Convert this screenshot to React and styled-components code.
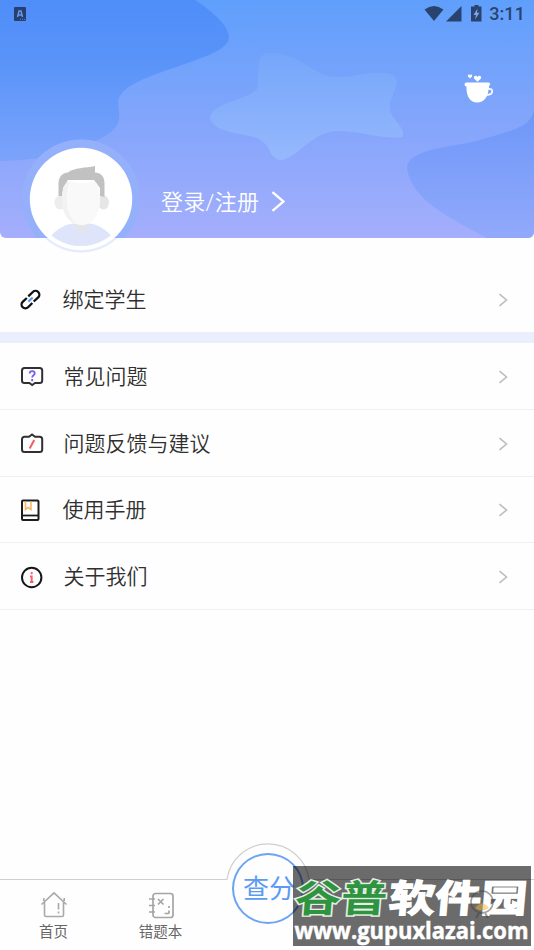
import React from "react";
import styled, { createGlobalStyle } from "styled-components";

const GlobalStyle = createGlobalStyle`
  body {
    margin: 0;
    background-color: #fefefe;
    font-family: Roboto, "Noto Sans CJK SC", sans-serif;
  }
`;

const PageDiv = styled.div`
  position: relative;
  width: 534px;
  height: 950px;
  display: flex;
  flex-direction: column;
  overflow: hidden;
`;

const HeaderDiv = styled.header`
  position: relative;
  height: 238px;
  display: flex;
  flex-direction: column;
`;

const HeaderArt = styled.svg`
  position: absolute;
  left: 0;
  top: 0;
  border-radius: 0 0 6px 6px;
`;

const StatusBar = styled.div`
  position: relative;
  height: 27px;
  padding: 0 9px 0 14px;
  display: flex;
  align-items: center;
  justify-content: space-between;
`;

const StatusRight = styled.div`
  display: flex;
  align-items: center;
  color: #29436f;
  font-size: 18px;
  font-weight: 500;
  line-height: 27px;
  letter-spacing: 0.1px;
`;

const CupRow = styled.div`
  position: relative;
  height: 31px;
  padding: 47px 40px 0 0;
  display: flex;
  justify-content: flex-end;
`;

const ProfileDiv = styled.div`
  position: relative;
  display: flex;
  margin-top: 34px;
  padding-left: 21px;
`;

const LoginDiv = styled.div`
  display: flex;
  align-items: center;
  height: 30px;
  margin: 47px 0 0 20px;
  color: white;
  font-size: 22px;
  font-weight: 350;
  line-height: 28px;
  letter-spacing: 0.3px;
  white-space: nowrap;

  svg {
    margin-left: 12px;
  }
`;

const LoginText = styled.span`
  padding-top: 3px;
`;

const Menu = styled.main`
  flex: 1;
`;

const MenuRow = styled.div`
  box-sizing: border-box;
  height: ${(props) => (props.$first ? "105px" : "66.75px")};
  padding: ${(props) => (props.$first ? "29px 26px 0 20px" : "2px 26px 0 20px")};
  border-bottom: ${(props) =>
    props.$first ? "11px solid #ebeffd" : "1px solid #f0f0f1"};
  display: flex;
  align-items: center;
  color: #303030;
  font-size: 21px;
  font-weight: 350;
`;

const MenuIcon = styled.div`
  width: ${(props) => props.$width}px;
  display: flex;
`;

const MenuLabel = styled.div`
  flex: 1;
  line-height: 30px;
`;

const NavDiv = styled.nav`
  position: relative;
  height: 71px;
  display: flex;
`;

const NavLine = styled.svg`
  position: absolute;
  left: 0;
  top: -37px;
`;

const NavItem = styled.div`
  position: relative;
  width: 107px;
  padding-top: 12.5px;
  display: flex;
  flex-direction: column;
  align-items: center;
  color: #666;
  font-size: 14.5px;
  line-height: 20px;

  svg {
    height: 31px;
  }
`;

const ScoreButton = styled.div`
  position: absolute;
  left: 232px;
  top: -26px;
  box-sizing: border-box;
  width: 72px;
  height: 71px;
  padding-left: 2px;
  border: 2px solid #6ba3f5;
  border-radius: 50%;
  display: flex;
  align-items: center;
  justify-content: center;
  color: #5b9bf3;
  font-size: 26px;
  line-height: 36px;
  white-space: nowrap;
`;

const Watermark = styled.div`
  position: absolute;
  left: 293px;
  top: 866px;
  width: 238px;
  height: 80px;
  background-color: rgba(0, 0, 0, 0.58);

  svg {
    display: block;
    overflow: visible;
  }
`;

function Arrow({ color, width, height, stroke }) {
  return (
    <svg width={width} height={height} viewBox={`0 0 ${width} ${height}`}>
      <path
        d={`M1.5 1.2 L${width - 1.5} ${height / 2} L1.5 ${height - 1.2}`}
        fill="none"
        stroke={color}
        strokeWidth={stroke}
      />
    </svg>
  );
}

function HeaderBackground() {
  return (
    <HeaderArt width="534" height="238" viewBox="0 0 534 238">
      <defs>
        <linearGradient id="sky" x1="0" y1="0" x2="0" y2="238" gradientUnits="userSpaceOnUse">
          <stop offset="0" stopColor="#5f9ffc" />
          <stop offset="0.5" stopColor="#82a5fb" />
          <stop offset="1" stopColor="#a5aefc" />
        </linearGradient>
        <linearGradient id="left" x1="0" y1="0" x2="0" y2="160" gradientUnits="userSpaceOnUse">
          <stop offset="0" stopColor="#4f8df9" />
          <stop offset="0.4" stopColor="#5a94f9" />
          <stop offset="1" stopColor="#7ca3fb" />
        </linearGradient>
        <linearGradient id="star" x1="0" y1="52" x2="0" y2="160" gradientUnits="userSpaceOnUse">
          <stop offset="0" stopColor="#75a6fa" />
          <stop offset="1" stopColor="#96b8fd" />
        </linearGradient>
        <linearGradient id="right" x1="0" y1="110" x2="0" y2="238" gradientUnits="userSpaceOnUse">
          <stop offset="0" stopColor="#6d97f9" />
          <stop offset="1" stopColor="#92a9fb" />
        </linearGradient>
      </defs>
      <rect width="534" height="238" fill="url(#sky)" />
      <path
        d="M0 0H195C212 11 229 26 229 37C229 48 211 55 185 64C150 76 118 86 118 103C118 110 121 116 118 123C114 133 101 139 80 148C55 157 35 160 0 161Z"
        fill="url(#left)"
      />
      <path
        d="M210 118C211 103 248 100 257 89C261 80 253 53 269 53C298 51 314 77 336 77C355 78 380 67 395 76C401 86 388 97 390 110C392 120 408 130 402 137C383 140 358 130 335 131C311 133 296 159 281 160C268 159 272 144 257 138C240 133 213 132 210 118Z"
        fill="url(#star)"
      />
      <path
        d="M534 110C530 129 508 131 480 140C449 148 406 149 407 169C413 200 446 216 487 238H534Z"
        fill="url(#right)"
      />
    </HeaderArt>
  );
}

function InputBadge() {
  return (
    <svg width="12" height="14" viewBox="0 0 12 14">
      <rect width="12" height="14" rx="1" fill="#263f70" />
      <path d="M3.500 10L5 4H7L8.500 10M4 8H8" fill="none" stroke="#6896e5" strokeWidth="1.500" />
      <path d="M6 12.300H11" stroke="#5c86cb" strokeWidth="1" strokeDasharray="1 1" />
    </svg>
  );
}

function StatusIcons() {
  return (
    <svg width="65" height="20" viewBox="0 0 65 20">
      <path d="M0.5 5.5Q10 -1.5 19.5 5.5L10 17Z" fill="#29436f" />
      <path d="M22 17.5L37.5 2V17.5Z" fill="#29436f" />
      <path d="M50.5 1h4v1.5h3V17.5H47V2.5h3.5Z" fill="#29436f" />
      <path d="M53.5 4.5L49.5 11H52L51 15.5L55.5 8.8H53Z" fill="#78a7ef" />
    </svg>
  );
}

function CupIcon() {
  return (
    <svg width="30" height="31" viewBox="0 0 30 31">
      <path
        d="M2.500 8.500H24.500a1.700 1.700 0 0 1 .5 3.300V14.500H24.500C24.500 22.500 20 28.500 13.200 28.500S2.500 22.500 2.500 14.500V12.500a2 2 0 0 1 0-4Z"
        fill="white"
      />
      <path d="M23.500 15C30 13.500 30 21 22.500 20.800" fill="none" stroke="white" strokeWidth="1.700" />
      <path d="M13.500 7.800L10 4.500C9 1.500 12.500 1 13.500 3C14.500 1 18 1.500 17 4.500Z" fill="white" />
      <path d="M6 4.500L4 2.500C3.500 0 5.500 0 6 1.200C6.500 0 8.800 0 8 2.500Z" fill="white" />
    </svg>
  );
}

function Avatar() {
  return (
    <svg width="120" height="120" viewBox="0 0 120 120">
      <defs>
        <clipPath id="face">
          <circle cx="60" cy="59.500" r="47.500" />
        </clipPath>
        <clipPath id="ringTop">
          <rect width="120" height="99" />
        </clipPath>
      </defs>
      <circle cx="60" cy="60" r="53.500" fill="#e3ecfe" />
      <circle cx="60" cy="59.500" r="59" fill="#95b0fb" clipPath="url(#ringTop)" />
      <circle cx="60" cy="60" r="51.200" fill="white" />
      <g clipPath="url(#face)">
        <path d="M29 99C34 90 46 84.500 53 84.500H68C76 84.500 86 91 92 99V112H29Z" fill="#dee5fa" />
        <path d="M54 78H67V89Q60 98 54 89Z" fill="#e4e5e6" />
      </g>
      <ellipse cx="39" cy="63.500" rx="5.500" ry="7" fill="#ededee" />
      <ellipse cx="82.500" cy="63.500" rx="5.500" ry="7" fill="#e6e6e6" />
      <path
        d="M37.500 57V45C37.500 38 41 34 47 33.500C53 28.500 65 29 74 27V33.500C80 33.500 83.500 38 83.500 44V58L79 57V49L73 41H47L42 49V57Z"
        fill="#c1c1c1"
      />
      <path d="M41 60C41 51 43 44 49 42C56 45 67 45 72 42C78 44 79 52 79 61C79 76 71 86 61 86C50 86 41 76 41 60Z" fill="#f9f9f9" />
      <path d="M41 60C41 51 43 44 49 42C44 54 44 74 55 85C46 82 41 73 41 60Z" fill="#f1f2f3" />
    </svg>
  );
}

function LinkIcon() {
  return (
    <svg width="21" height="21" viewBox="0 0 21 21" fill="none" strokeWidth="2.300">
      <path d="M8.300 7.300L12.800 3a3.800 3.800 0 0 1 5.400 5.400L13.700 12.500" stroke="#111" />
      <path d="M6.800 9L2.700 12.900a3.800 3.800 0 0 0 5.400 5.400L12.300 14" stroke="#111" />
      <path d="M8.300 12.700L12.700 8.500" stroke="#5d9ff0" />
    </svg>
  );
}

function QuestionIcon() {
  return (
    <svg width="24" height="21" viewBox="0 0 24 21" fill="none">
      <path
        d="M4.500 2H19.700a2.500 2.500 0 0 1 2.500 2.500V14.500a2.500 2.500 0 0 1-2.500 2.500H15L12.200 19L9.400 17H4.500A2.500 2.500 0 0 1 2 14.500V4.500A2.500 2.500 0 0 1 4.500 2Z"
        stroke="#303033"
        strokeWidth="2"
      />
      <path d="M9.700 7.500C9.700 4.300 14.700 4.300 14.700 7.500C14.700 9.500 12.200 9 12.200 11.500M12.200 13V15.200" stroke="#7760ee" strokeWidth="1.900" />
    </svg>
  );
}

function FeedbackIcon() {
  return (
    <svg width="24" height="21" viewBox="0 0 24 21" fill="none">
      <path
        d="M4.500 3.700H9L12 1.500L15 3.700H19.700A2.500 2.500 0 0 1 22.200 6.200V16.500A2.500 2.500 0 0 1 19.700 19H4.500A2.500 2.500 0 0 1 2 16.500V6.200A2.500 2.500 0 0 1 4.500 3.700Z"
        stroke="#303033"
        strokeWidth="2"
      />
      <path d="M14.200 7L9.700 15.500" stroke="#f15e63" strokeWidth="2" />
    </svg>
  );
}

function BookIcon() {
  return (
    <svg width="20" height="22" viewBox="0 0 20 22" fill="none">
      <rect x="2" y="1.500" width="16.500" height="19.500" rx="1" stroke="#1d1d1d" strokeWidth="2" />
      <path d="M2 16.500H18" stroke="#1d1d1d" strokeWidth="1.800" />
      <path d="M5.500 2.500V10.500L8.200 8.500L11 10.500V2.500" stroke="#f4bb64" strokeWidth="1.600" />
    </svg>
  );
}

function InfoIcon() {
  return (
    <svg width="23" height="23" viewBox="0 0 23 23" fill="none">
      <circle cx="11.700" cy="11.500" r="9.700" stroke="#161616" strokeWidth="2" />
      <path d="M11.700 6V8.200M10 10.500H11.700V16M10 16H13.400" stroke="#f1646b" strokeWidth="1.900" />
    </svg>
  );
}

function HomeIcon() {
  return (
    <svg width="28" height="31" viewBox="0 0 28 31" fill="none" stroke="#a9a9a9" strokeWidth="1.600">
      <path d="M1.500 12.500L14 0.800L26.500 12.500M4.500 10V23Q4.500 24.500 6 24.500H22Q23.500 24.500 23.500 23V10M3.800 6V9M24.200 6V9" />
      <path d="M18.500 11V17.500M18.500 19.500V21.500" />
    </svg>
  );
}

function NotebookIcon() {
  return (
    <svg width="28" height="31" viewBox="0 0 28 31" fill="none" stroke="#a5a5a5" strokeWidth="1.700">
      <rect x="6" y="1.500" width="20" height="24" rx="2.500" />
      <path d="M2 7H8M2 13.500H8M2 20H8" />
      <path d="M11 7L16.500 12.500M16.500 7L11 12.500M22 14V16M17.500 21.500H21Q22 21.500 22 20.500V18.500" />
    </svg>
  );
}

function MineShape() {
  return (
    <>
      <circle cx="11" cy="11" r="11" fill="none" stroke="#444" strokeWidth="1.600" />
      <path d="M4 17Q11 8 18 17Q11 22 4 17Z" fill="#f5b52e" />
      <path d="M8 22L5 27M14 22L17 27" fill="none" stroke="#444" strokeWidth="2" />
    </>
  );
}

const rows = [
  { label: "绑定学生", icon: <LinkIcon />, width: 42.5, first: true },
  { label: "常见问题", icon: <QuestionIcon />, width: 43.5 },
  { label: "问题反馈与建议", icon: <FeedbackIcon />, width: 43.5 },
  { label: "使用手册", icon: <BookIcon />, width: 42.5 },
  { label: "关于我们", icon: <InfoIcon />, width: 43.5 },
];

function App() {
  return (
    <PageDiv>
      <GlobalStyle />
      <HeaderDiv>
        <HeaderBackground />
        <StatusBar>
          <InputBadge />
          <StatusRight>
            <StatusIcons />
            3:11
          </StatusRight>
        </StatusBar>
        <CupRow>
          <CupIcon />
        </CupRow>
        <ProfileDiv>
          <Avatar />
          <LoginDiv>
            <LoginText>登录/注册</LoginText>
            <Arrow color="white" width={14} height={21} stroke={2.3} />
          </LoginDiv>
        </ProfileDiv>
      </HeaderDiv>

      <Menu>
        {rows.map((row) => (
          <MenuRow key={row.label} $first={row.first}>
            <MenuIcon $width={row.width}>{row.icon}</MenuIcon>
            <MenuLabel>{row.label}</MenuLabel>
            <Arrow color="#bdbdbd" width={10} height={14} stroke={1.6} />
          </MenuRow>
        ))}
      </Menu>

      <NavDiv>
        <NavLine width="534" height="108" viewBox="0 0 534 108">
          <path
            d="M0 37.500H227A41.400 41.400 0 0 1 309 37.500H534"
            fill="none"
            stroke="#cfcfcf"
            strokeWidth="1.200"
          />
        </NavLine>
        <NavItem>
          <HomeIcon />
          首页
        </NavItem>
        <NavItem>
          <NotebookIcon />
          错题本
        </NavItem>
        <ScoreButton>查分</ScoreButton>
      </NavDiv>

      <Watermark>
        <svg width="238" height="84" viewBox="0 0 238 84">
          <g
            transform="translate(0 46) skewX(-5) scale(1 0.82)"
            fontFamily="Noto Sans CJK SC, sans-serif"
            fontSize="46"
            fontWeight="700"
            paintOrder="stroke"
          >
            <text x="1" fill="#2f9440" stroke="#e6efe6" strokeWidth="3.500">
              谷普
            </text>
            <text x="95" fill="white" stroke="white" strokeWidth="1.800">
              软件园
            </text>
          </g>
          <g transform="translate(178 25)" opacity="0.5">
            <MineShape />
          </g>
          <text
            x="1.500"
            y="72.500"
            fontFamily="Open Sans, sans-serif"
            fontSize="24"
            fontWeight="700"
            fill="white"
            stroke="white"
            strokeWidth="0.500"
            textLength="234"
            lengthAdjust="spacingAndGlyphs"
          >
            www.gupuxlazai.com
          </text>
        </svg>
      </Watermark>
    </PageDiv>
  );
}

export default App;
